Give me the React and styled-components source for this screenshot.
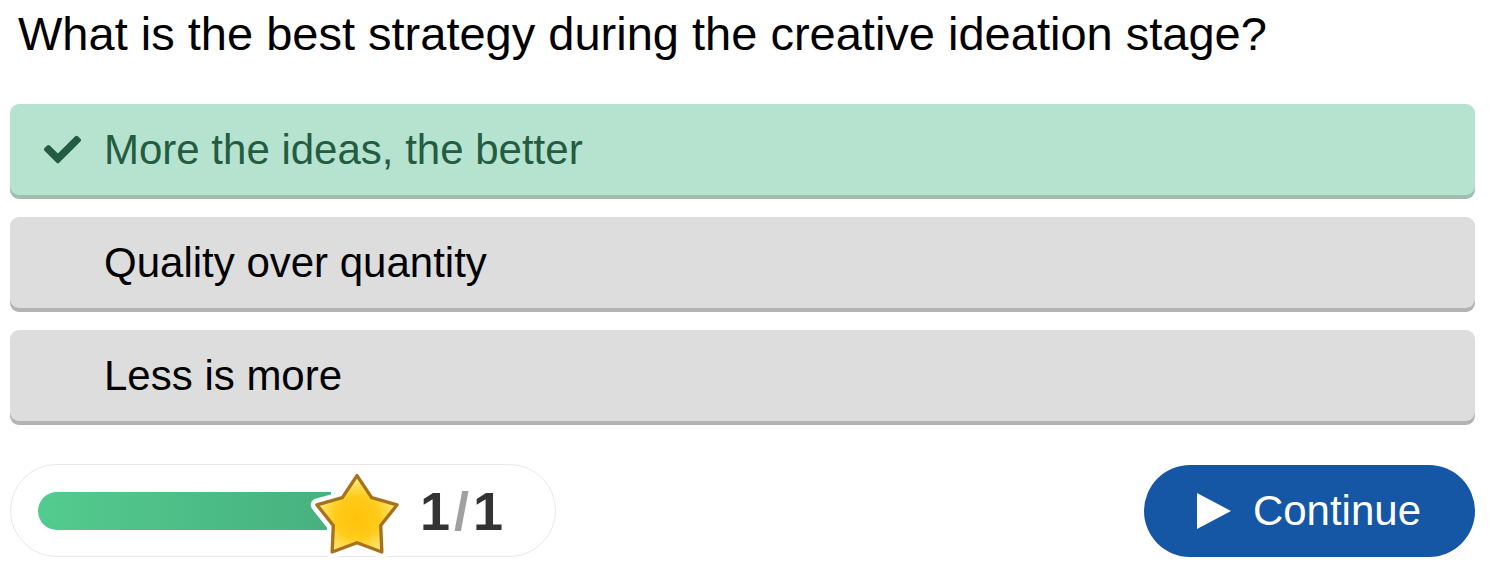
import React from 'react'
import styled, { createGlobalStyle } from 'styled-components'

const GlobalStyle = createGlobalStyle`
    body {
        margin: 0;
        background: #ffffff;
        font-family: "Liberation Sans", Arial, sans-serif;
    }
`

const Page = styled.div`
    width: 1465px;
    padding: 7px 14px 0 10px;
`

const Question = styled.h1`
    margin: 0 0 43px;
    padding-left: 8px;
    font-size: 47px;
    line-height: 54px;
    font-weight: 400;
    color: #000;
`

const Options = styled.div`
    display: flex;
    flex-direction: column;
    gap: 22px;
`

const Option = styled.div`
    display: flex;
    align-items: center;
    height: 91px;
    padding-left: 34px;
    border-radius: 9px;
    font-size: 42px;
    background-color: ${p => (p.$correct ? '#b5e3cf' : '#dddddd')};
    color: ${p => (p.$correct ? '#245c42' : '#000')};
    box-shadow: 0 4px 0 ${p => (p.$correct ? '#9fbead' : '#b3b3b3')};
`

const CheckSlot = styled.span`
    display: flex;
    align-items: center;
    width: 60px;
    color: #245c42;
`

const Footer = styled.div`
    display: flex;
    justify-content: space-between;
    align-items: center;
    margin-top: 43px;
`

const ProgressPill = styled.div`
    display: flex;
    align-items: center;
    box-sizing: border-box;
    width: 546px;
    height: 93px;
    padding-left: 27px;
    border: 1px solid #e9e9e9;
    border-radius: 47px;
`

const Track = styled.div`
    position: relative;
    width: 293px;
    height: 38px;
`

const Bar = styled.div`
    height: 100%;
    border-radius: 19px 0 0 19px;
    background: linear-gradient(90deg, #53cb8f, #47b17f);
`

const StarBadge = styled.svg`
    position: absolute;
    left: 271px;
    top: -25px;
`

const Count = styled.div`
    display: flex;
    align-items: baseline;
    margin-left: 89px;
    font-size: 54px;
    font-weight: 700;
    color: #333;
`

const Slash = styled.span`
    margin: 0 4px;
    color: #a0a0a0;
`

const ContinueButton = styled.button`
    display: flex;
    align-items: center;
    gap: 22px;
    height: 92px;
    padding: 0 54px 0 53px;
    border: none;
    border-radius: 46px;
    background-color: #1557a5;
    color: #fff;
    font-family: inherit;
    font-size: 42px;
    cursor: pointer;
`

const STAR_POINTS = '50,9 65.3,32 91.8,39.4 74.7,61 75.9,88.6 50,79 24.1,88.6 25.3,61 8.2,39.4 34.7,32'

function Star() {
    return (
        <StarBadge width="96" height="94" viewBox="0 0 100 98">
            <defs>
                <radialGradient id="starFill" cx="50%" cy="55%" r="50%">
                    <stop offset="0%" stopColor="#ffc20a" />
                    <stop offset="55%" stopColor="#ffcb1a" />
                    <stop offset="100%" stopColor="#ffe978" />
                </radialGradient>
            </defs>
            <polygon points={STAR_POINTS} fill="#fff" stroke="#fff" strokeWidth="13" strokeLinejoin="round" />
            <polygon points={STAR_POINTS} fill="url(#starFill)" stroke="#a8711c" strokeWidth="3.5" strokeLinejoin="round" />
        </StarBadge>
    )
}

function CheckIcon() {
    return (
        <svg width="37" height="37" viewBox="0 0 512 512" fill="currentColor">
            <path d="M173.898 439.404l-166.4-166.4c-9.997-9.997-9.997-26.206 0-36.204l36.203-36.204c9.997-9.998 26.207-9.998 36.204 0L192 312.69 432.095 72.596c9.997-9.997 26.207-9.997 36.204 0l36.203 36.204c9.997 9.997 9.997 26.206 0 36.204l-294.4 294.401c-9.998 9.997-26.207 9.997-36.204-.001z" />
        </svg>
    )
}

const options = [
    { id: 1, text: 'More the ideas, the better', correct: true },
    { id: 2, text: 'Quality over quantity', correct: false },
    { id: 3, text: 'Less is more', correct: false },
]

export default function App() {
    return (
        <Page>
            <GlobalStyle />
            <Question>What is the best strategy during the creative ideation stage?</Question>
            <Options>
                {options.map(option => (
                    <Option key={option.id} $correct={option.correct}>
                        <CheckSlot>{option.correct && <CheckIcon />}</CheckSlot>
                        {option.text}
                    </Option>
                ))}
            </Options>
            <Footer>
                <ProgressPill>
                    <Track>
                        <Bar />
                        <Star />
                    </Track>
                    <Count>
                        1<Slash>/</Slash>1
                    </Count>
                </ProgressPill>
                <ContinueButton>
                    <svg width="34" height="36" viewBox="0 0 34 36">
                        <polygon points="0,0 34,18 0,36" fill="#fff" />
                    </svg>
                    Continue
                </ContinueButton>
            </Footer>
        </Page>
    )
}
